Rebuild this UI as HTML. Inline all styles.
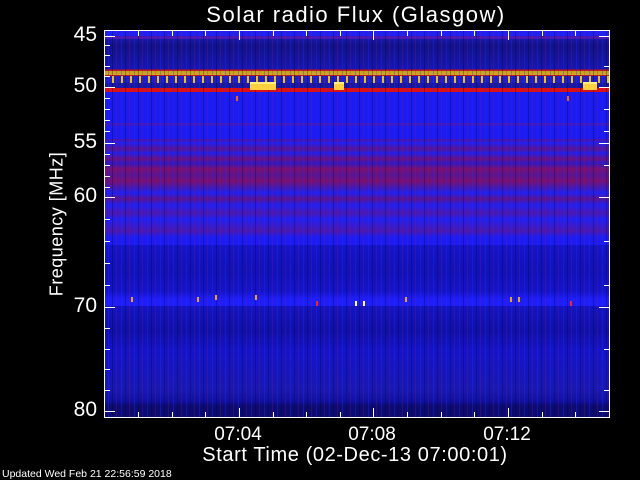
<!DOCTYPE html>
<html><head><style>
html,body{margin:0;padding:0;background:#000;width:640px;height:480px;overflow:hidden;font-family:"Liberation Sans",sans-serif;color:#fff}
.t{position:absolute;white-space:nowrap;font-weight:normal}
#plot{position:absolute;left:104px;top:30px;width:506px;height:388px;border:1px solid #fff;box-sizing:border-box;overflow:hidden;
background:linear-gradient(to bottom,
#2020f0 0px,#2020f0 5px,#4a18b0 5px,#4a18b0 8px,#1818a8 8px,#12128a 14px,#14149a 25px,#1616b0 38px,#2a1490 38px,#c01818 39px,#c01818 40px,#c8a020 40px,#d0a828 44px,#c01818 44px,#c01818 45px,#2020c0 45px,#2020c0 52px,#1818a0 52px,#1818a0 57px,#e01010 57px,#e01010 61px,#1c1cf0 61px,#1c1cf0 92px,#4a18b0 92px,#1c1cf0 96px,#1c1cf0 108px,#5014a0 108px,#2020f0 112px,#5a1490 118px,#2020e8 122px,#6a1080 128px,#3018c0 132px,#7a1070 138px,#5a1490 144px,#7a1070 150px,#4818a8 156px,#2020f0 162px,#5a1490 168px,#2020f0 174px,#4a18b0 182px,#2020f0 188px,#4a18b0 200px,#1c1cf0 206px,#1c1cf0 214px,#1414c8 214px,#1212b8 240px,#1414c8 260px,#1e1ef8 268px,#1e1ef8 275px,#1414c0 275px,#1010a8 300px,#1414c8 320px,#1818b0 360px,#1010a0 370px,#0c0c70 375px,#0c0c70 388px);}
.nz{position:absolute;left:0;top:0;right:0;bottom:0;background:repeating-linear-gradient(to right,rgba(0,0,0,0) 0,rgba(0,0,0,0) 3px,rgba(40,40,255,.35) 3px,rgba(40,40,255,.35) 4px,rgba(0,0,0,0) 4px,rgba(0,0,0,0) 7px,rgba(0,0,60,.3) 7px,rgba(0,0,60,.3) 8px,rgba(0,0,0,0) 8px,rgba(0,0,0,0) 11px,rgba(150,20,120,.25) 11px,rgba(150,20,120,.25) 12px,rgba(0,0,0,0) 12px,rgba(0,0,0,0) 13px)}
.yt{position:absolute;left:0;top:45px;width:100%;height:7px;background:repeating-linear-gradient(to right,transparent 0,transparent 7px,#e8c020 7px,#e8c020 9px)}
.blk{position:absolute;background:#ffd040;border-top:2px solid #fff080}
.tk{position:absolute;background:#fff}
.sp{position:absolute;width:2px;height:5px;background:#f0a020}
.yl{position:absolute;right:543px;font-size:21px;white-space:nowrap}
.xl{position:absolute;font-size:19px;width:80px;text-align:center;top:424px}
</style></head><body>
<div class="t" style="left:0;width:712px;text-align:center;top:2px;font-size:22px;letter-spacing:1.5px">Solar radio Flux (Glasgow)</div>
<div id="plot">
<div class="nz"></div>
<div class="yt"></div>
<div class="blk" style="left:145px;top:51px;width:26px;height:6px"></div>
<div class="blk" style="left:229px;top:51px;width:10px;height:6px"></div>
<div class="blk" style="left:478px;top:51px;width:14px;height:6px"></div>
<div class="sp" style="left:131px;top:65px;background:#f06020"></div>
<div class="sp" style="left:462px;top:65px;background:#f06020"></div>
<div class="sp" style="left:26px;top:266px"></div><div class="sp" style="left:92px;top:266px"></div>
<div class="sp" style="left:110px;top:264px"></div><div class="sp" style="left:150px;top:264px"></div>
<div class="sp" style="left:211px;top:270px;background:#ff2020"></div><div class="sp" style="left:250px;top:270px;background:#ffff80"></div>
<div class="sp" style="left:258px;top:270px;background:#ffff80"></div><div class="sp" style="left:300px;top:266px"></div>
<div class="sp" style="left:405px;top:266px"></div><div class="sp" style="left:413px;top:266px"></div>
<div class="sp" style="left:465px;top:270px;background:#ff2020"></div>
<!-- ticks top -->
<div class="tk" style="left:33px;top:0;width:1px;height:5px"></div><div class="tk" style="left:67px;top:0;width:1px;height:5px"></div>
<div class="tk" style="left:100px;top:0;width:1px;height:5px"></div><div class="tk" style="left:134px;top:0;width:1px;height:9px"></div>
<div class="tk" style="left:168px;top:0;width:1px;height:5px"></div><div class="tk" style="left:201px;top:0;width:1px;height:5px"></div>
<div class="tk" style="left:235px;top:0;width:1px;height:5px"></div><div class="tk" style="left:268px;top:0;width:1px;height:9px"></div>
<div class="tk" style="left:302px;top:0;width:1px;height:5px"></div><div class="tk" style="left:336px;top:0;width:1px;height:5px"></div>
<div class="tk" style="left:369px;top:0;width:1px;height:5px"></div><div class="tk" style="left:403px;top:0;width:1px;height:9px"></div>
<div class="tk" style="left:437px;top:0;width:1px;height:5px"></div><div class="tk" style="left:470px;top:0;width:1px;height:5px"></div>
<!-- ticks bottom -->
<div class="tk" style="left:33px;bottom:0;width:1px;height:5px"></div><div class="tk" style="left:67px;bottom:0;width:1px;height:5px"></div>
<div class="tk" style="left:100px;bottom:0;width:1px;height:5px"></div><div class="tk" style="left:134px;bottom:0;width:1px;height:9px"></div>
<div class="tk" style="left:168px;bottom:0;width:1px;height:5px"></div><div class="tk" style="left:201px;bottom:0;width:1px;height:5px"></div>
<div class="tk" style="left:235px;bottom:0;width:1px;height:5px"></div><div class="tk" style="left:268px;bottom:0;width:1px;height:9px"></div>
<div class="tk" style="left:302px;bottom:0;width:1px;height:5px"></div><div class="tk" style="left:336px;bottom:0;width:1px;height:5px"></div>
<div class="tk" style="left:369px;bottom:0;width:1px;height:5px"></div><div class="tk" style="left:403px;bottom:0;width:1px;height:9px"></div>
<div class="tk" style="left:437px;bottom:0;width:1px;height:5px"></div><div class="tk" style="left:470px;bottom:0;width:1px;height:5px"></div>
<!-- left ticks -->
<div class="tk" style="left:0;top:5px;width:10px;height:1px"></div>
<div class="tk" style="left:0;top:56px;width:10px;height:1px"></div>
<div class="tk" style="left:0;top:112px;width:10px;height:1px"></div>
<div class="tk" style="left:0;top:166px;width:10px;height:1px"></div>
<div class="tk" style="left:0;top:276px;width:10px;height:1px"></div>
<div class="tk" style="left:0;top:380px;width:10px;height:1px"></div>
<div class="tk" style="left:0;top:14px;width:5px;height:1px"></div><div class="tk" style="left:0;top:24px;width:5px;height:1px"></div>
<div class="tk" style="left:0;top:35px;width:5px;height:1px"></div><div class="tk" style="left:0;top:45px;width:5px;height:1px"></div>
<div class="tk" style="left:0;top:67px;width:5px;height:1px"></div><div class="tk" style="left:0;top:78px;width:5px;height:1px"></div>
<div class="tk" style="left:0;top:89px;width:5px;height:1px"></div><div class="tk" style="left:0;top:100px;width:5px;height:1px"></div>
<div class="tk" style="left:0;top:123px;width:5px;height:1px"></div><div class="tk" style="left:0;top:134px;width:5px;height:1px"></div>
<div class="tk" style="left:0;top:145px;width:5px;height:1px"></div><div class="tk" style="left:0;top:156px;width:5px;height:1px"></div>
<div class="tk" style="left:0;top:188px;width:5px;height:1px"></div><div class="tk" style="left:0;top:210px;width:5px;height:1px"></div>
<div class="tk" style="left:0;top:232px;width:5px;height:1px"></div><div class="tk" style="left:0;top:254px;width:5px;height:1px"></div>
<div class="tk" style="left:0;top:297px;width:5px;height:1px"></div><div class="tk" style="left:0;top:318px;width:5px;height:1px"></div>
<div class="tk" style="left:0;top:338px;width:5px;height:1px"></div><div class="tk" style="left:0;top:359px;width:5px;height:1px"></div>
<!-- right ticks -->
<div class="tk" style="right:0;top:5px;width:10px;height:1px"></div>
<div class="tk" style="right:0;top:56px;width:10px;height:1px"></div>
<div class="tk" style="right:0;top:112px;width:10px;height:1px"></div>
<div class="tk" style="right:0;top:166px;width:10px;height:1px"></div>
<div class="tk" style="right:0;top:276px;width:10px;height:1px"></div>
<div class="tk" style="right:0;top:380px;width:10px;height:1px"></div>
<div class="tk" style="right:0;top:35px;width:5px;height:1px"></div><div class="tk" style="right:0;top:78px;width:5px;height:1px"></div>
<div class="tk" style="right:0;top:100px;width:5px;height:1px"></div><div class="tk" style="right:0;top:134px;width:5px;height:1px"></div>
<div class="tk" style="right:0;top:210px;width:5px;height:1px"></div><div class="tk" style="right:0;top:254px;width:5px;height:1px"></div>
<div class="tk" style="right:0;top:318px;width:5px;height:1px"></div><div class="tk" style="right:0;top:359px;width:5px;height:1px"></div>
</div>
<div class="yl" style="top:23px">45</div>
<div class="yl" style="top:74px">50</div>
<div class="yl" style="top:130px">55</div>
<div class="yl" style="top:184px">60</div>
<div class="yl" style="top:294px">70</div>
<div class="yl" style="top:398px">80</div>
<div class="t" style="left:57px;top:224px;font-size:18px;letter-spacing:0.5px;transform:translate(-50%,-50%) rotate(-90deg);">Frequency [MHz]</div>
<div class="xl" style="left:198px">07:04</div>
<div class="xl" style="left:332px">07:08</div>
<div class="xl" style="left:467px">07:12</div>
<div class="t" style="left:0;width:710px;text-align:center;top:444px;font-size:20px;letter-spacing:0.6px">Start Time (02-Dec-13 07:00:01)</div>
<div class="t" style="left:2px;top:468px;font-size:10.5px">Updated Wed Feb 21 22:56:59 2018</div>
</body></html>
